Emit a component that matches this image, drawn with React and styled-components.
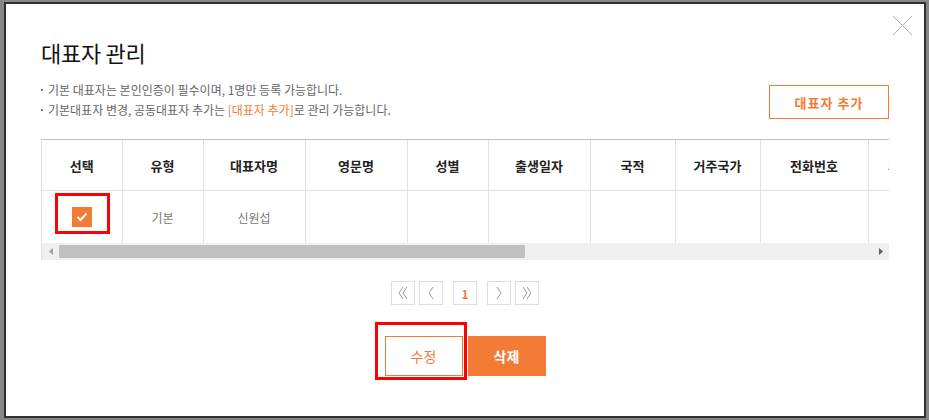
import React from 'react'
import styled, { createGlobalStyle } from 'styled-components'

const GlobalStyle = createGlobalStyle`
  html, body {
    margin: 0;
    padding: 0;
    background: #878787;
  }
  body {
    font-family: "Noto Sans CJK KR", "Liberation Sans", sans-serif;
  }
`

const Page = styled.div`
  padding: 2px 3px 2px 4px;
`

const Modal = styled.div`
  position: relative;
  box-sizing: border-box;
  width: 922px;
  height: 416px;
  background: #fff;
  border: 2px solid #2b3036;
  padding: 33px 35px 0 35px;
`

const CloseButton = styled.button`
  position: absolute;
  top: 11px;
  right: 11px;
  width: 21px;
  height: 21px;
  padding: 0;
  border: 0;
  background: none;
  cursor: pointer;
`

const Title = styled.h2`
  margin: 0;
  font-size: 22px;
  font-weight: 400;
  line-height: 30px;
  color: #111;
  letter-spacing: -0.3px;
`

const InfoRow = styled.div`
  display: flex;
  justify-content: space-between;
  align-items: flex-end;
  margin-top: 13px;
`

const Notes = styled.ul`
  margin: 0;
  padding: 0;
  list-style: none;
`

const Note = styled.li`
  position: relative;
  padding-left: 7px;
  font-size: 12px;
  line-height: 20px;
  color: #666;
  &::before {
    content: '';
    position: absolute;
    left: 0;
    top: 9px;
    width: 2px;
    height: 2px;
    background: #777;
  }
`

const Accent = styled.span`
  color: #f47b35;
`

const OutlineButton = styled.button`
  box-sizing: border-box;
  width: ${(props) => props.w || '120px'};
  height: ${(props) => props.h || '34px'};
  border: 1px solid #f47b35;
  background: #fff;
  color: #f47b35;
  font-family: inherit;
  font-size: ${(props) => props.fs || '13px'};
  font-weight: ${(props) => props.bold ? 700 : 400};
  letter-spacing: ${(props) => props.bold ? '1px' : '0'};
  cursor: pointer;
  padding: 0;
`

const AddButton = styled(OutlineButton)`
  margin-bottom: 1px;
`

const TableWrap = styled.div`
  margin-top: 19px;
  border-top: 1px solid #b9c3cd;
  border-left: 1px solid #e1e1e1;
  overflow: hidden;
  width: 847px;
`

const Table = styled.table`
  border-collapse: collapse;
  table-layout: fixed;
  width: 1200px;
`

const Th = styled.th`
  height: 50px;
  padding: 0;
  border-right: 1px solid #e1e1e1;
  border-bottom: 1px solid #e1e1e1;
  font-size: 13px;
  font-weight: 700;
  color: #222;
  text-align: center;
  white-space: nowrap;
`

const Td = styled.td`
  height: 52px;
  padding: 0;
  border-right: 1px solid #e1e1e1;
  font-size: 12px;
  color: #777;
  text-align: center;
  white-space: nowrap;
`

const CheckCell = styled.div`
  position: relative;
  display: flex;
  justify-content: center;
  align-items: center;
  height: 52px;
`

const CheckBox = styled.span`
  display: flex;
  align-items: center;
  justify-content: center;
  width: 20px;
  height: 20px;
  background: #f47b35;
`

const Highlight = styled.span`
  position: absolute;
  box-sizing: border-box;
  border: 3px solid #ff0000;
  pointer-events: none;
  left: ${(props) => props.l};
  top: ${(props) => props.t};
  width: ${(props) => props.w};
  height: ${(props) => props.h};
`

const Scrollbar = styled.div`
  display: flex;
  align-items: center;
  width: 847px;
  height: 17px;
  background: #f0f0f0;
  border-left: 1px solid #e1e1e1;
`

const ScrollArrow = styled.span`
  display: flex;
  align-items: center;
  justify-content: center;
  width: 17px;
  height: 17px;
`

const Thumb = styled.span`
  height: 13px;
  width: 466px;
  background: #c1c1c1;
`

const Track = styled.div`
  flex: 1;
  display: flex;
  align-items: center;
`

const Pager = styled.div`
  display: flex;
  justify-content: center;
  align-items: center;
  margin-top: 21px;
`

const PageBox = styled.button`
  box-sizing: border-box;
  width: 24px;
  height: 24px;
  border: 1px solid #dddddd;
  background: #fff;
  padding: 0;
  margin-left: ${(props) => props.ml || '0'};
  display: flex;
  align-items: center;
  justify-content: center;
  font-family: inherit;
  font-size: 12px;
  font-weight: 700;
  color: #f47b35;
  cursor: pointer;
`

const Actions = styled.div`
  display: flex;
  justify-content: center;
  gap: 5px;
  margin-top: 31px;
`

const Marked = styled.span`
  position: relative;
  display: inline-flex;
`

const FillButton = styled.button`
  box-sizing: border-box;
  width: 78px;
  height: 40px;
  border: 0;
  background: #f47b35;
  color: #fff;
  font-family: inherit;
  font-size: 14px;
  font-weight: 700;
  cursor: pointer;
  padding: 0;
`

const Chevron = ({ dir = 'left', double }) => {
  const pts = dir === 'left' ? ['9,4 5,10 9,16', '13,4 9,10 13,16'] : ['5,4 9,10 5,16', '9,4 13,10 9,16']
  const single = dir === 'left' ? '11,4 7,10 11,16' : '7,4 11,10 7,16'
  return (
    <svg width="18" height="20" viewBox="0 0 18 20" fill="none" stroke="#9a9a9a" strokeWidth="1">
      {double ? pts.map((p) => <polyline key={p} points={p} />) : <polyline points={single} />}
    </svg>
  )
}

const columns = [
  { label: '선택', w: 80 },
  { label: '유형', w: 81 },
  { label: '대표자명', w: 102 },
  { label: '영문명', w: 102 },
  { label: '성별', w: 81 },
  { label: '출생일자', w: 102 },
  { label: '국적', w: 85 },
  { label: '거주국가', w: 85 },
  { label: '전화번호', w: 108 },
  { label: '휴대폰번호', w: 100 },
  { label: '이메일', w: 140 },
  { label: '주소', w: 134 },
]

const App = () => {
  return (
    <Page>
      <GlobalStyle />
      <Modal>
        <CloseButton aria-label="닫기">
          <svg width="21" height="21" viewBox="0 0 21 21" stroke="#b0b0b0" strokeWidth="1">
            <line x1="1" y1="1" x2="20" y2="20" />
            <line x1="20" y1="1" x2="1" y2="20" />
          </svg>
        </CloseButton>
        <Title>대표자 관리</Title>
        <InfoRow>
          <Notes>
            <Note>기본 대표자는 본인인증이 필수이며, 1명만 등록 가능합니다.</Note>
            <Note>기본대표자 변경, 공동대표자 추가는 <Accent>[대표자 추가]</Accent>로 관리 가능합니다.</Note>
          </Notes>
          <AddButton bold>대표자 추가</AddButton>
        </InfoRow>
        <TableWrap>
          <Table>
            <colgroup>
              {columns.map((c) => <col key={c.label} style={{ width: c.w }} />)}
            </colgroup>
            <thead>
              <tr>
                {columns.map((c) => <Th key={c.label}>{c.label}</Th>)}
              </tr>
            </thead>
            <tbody>
              <tr>
                <Td>
                  <CheckCell>
                    <CheckBox>
                      <svg width="12" height="10" viewBox="0 0 12 10" fill="none" stroke="#fff" strokeWidth="2">
                        <polyline points="1.5,5 4.5,8 10.5,1.5" />
                      </svg>
                    </CheckBox>
                    <Highlight l="13px" t="2px" w="55px" h="41px" />
                  </CheckCell>
                </Td>
                <Td>기본</Td>
                <Td>신원섭</Td>
                {columns.slice(3).map((c) => <Td key={c.label} />)}
              </tr>
            </tbody>
          </Table>
        </TableWrap>
        <Scrollbar>
          <ScrollArrow>
            <svg width="4" height="7" viewBox="0 0 4 7"><polygon points="4,0 0,3.5 4,7" fill="#a3a3a3" /></svg>
          </ScrollArrow>
          <Track><Thumb /></Track>
          <ScrollArrow>
            <svg width="4" height="7" viewBox="0 0 4 7"><polygon points="0,0 4,3.5 0,7" fill="#606060" /></svg>
          </ScrollArrow>
        </Scrollbar>
        <Pager>
          <PageBox aria-label="처음"><Chevron dir="left" double /></PageBox>
          <PageBox ml="4px" aria-label="이전"><Chevron dir="left" /></PageBox>
          <PageBox ml="10px">1</PageBox>
          <PageBox ml="10px" aria-label="다음"><Chevron dir="right" /></PageBox>
          <PageBox ml="4px" aria-label="마지막"><Chevron dir="right" double /></PageBox>
        </Pager>
        <Actions>
          <Marked>
            <OutlineButton w="78px" h="40px" fs="14px">수정</OutlineButton>
            <Highlight l="-10px" t="-14px" w="92px" h="58px" />
          </Marked>
          <FillButton>삭제</FillButton>
        </Actions>
      </Modal>
    </Page>
  )
}

export default App
